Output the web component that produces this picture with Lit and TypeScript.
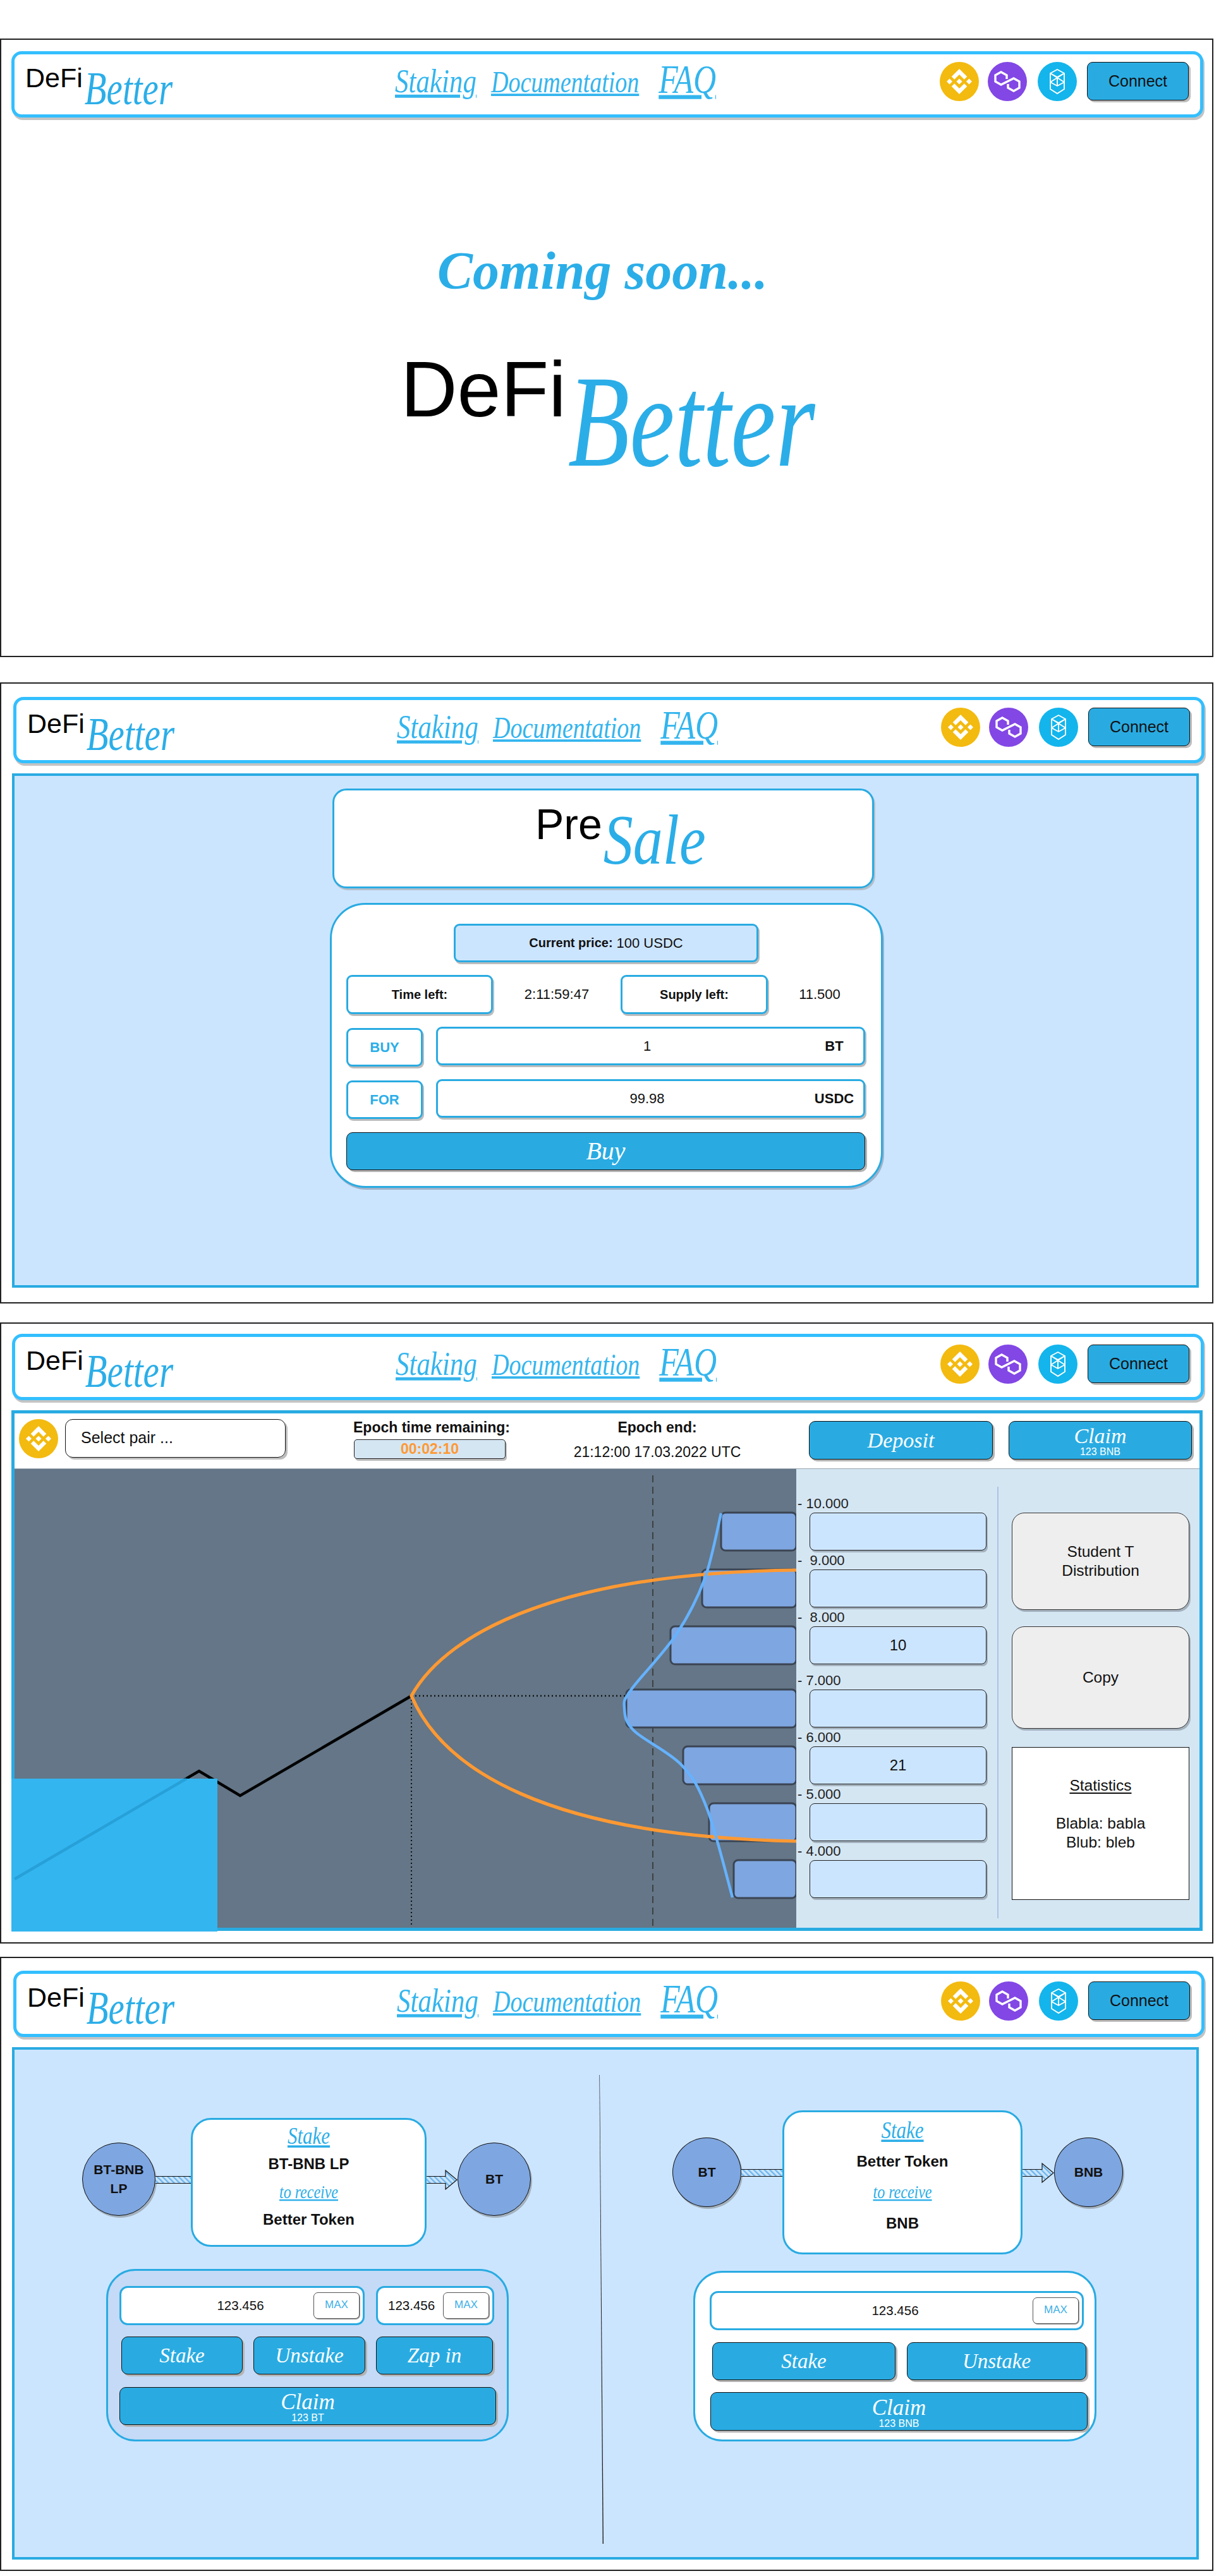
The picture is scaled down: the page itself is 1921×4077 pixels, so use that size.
import { LitElement, html, svg, css } from 'lit';
import { customElement } from 'lit/decorators.js';

type Pt = [number, number];

const ROWS = [
  { label: '- 10.000', value: '', barX: 1141, y: 2394 },
  { label: '-  9.000', value: '', barX: 1111, y: 2484 },
  { label: '-  8.000', value: '10', barX: 1061, y: 2574 },
  { label: '- 7.000', value: '', barX: 991, y: 2674, wide: true },
  { label: '- 6.000', value: '21', barX: 1081, y: 2764 },
  { label: '- 5.000', value: '', barX: 1122, y: 2854 },
  { label: '- 4.000', value: '', barX: 1161, y: 2944 },
];

const DIST: Pt[] = [
  [1141, 2395], [1115, 2499], [1070, 2587], [999, 2674], [988, 2703],
  [1003, 2739], [1078, 2793], [1119, 2863], [1159, 3003],
];

// catmull-rom through the points, good enough for the distribution curve
function smooth(p: Pt[]) {
  let d = `M${p[0][0]} ${p[0][1]}`;
  for (let i = 0; i < p.length - 1; i++) {
    const a = p[Math.max(i - 1, 0)];
    const b = p[i];
    const c = p[i + 1];
    const e = p[Math.min(i + 2, p.length - 1)];
    d += ` C${b[0] + (c[0] - a[0]) / 6} ${b[1] + (c[1] - a[1]) / 6} ${c[0] - (e[0] - b[0]) / 6} ${c[1] - (e[1] - b[1]) / 6} ${c[0]} ${c[1]}`;
  }
  return d;
}

const bnbIcon = html`
  <svg class="coin" viewBox="0 0 62 62">
    <circle cx="31" cy="31" r="31" fill="#F3BA0F"></circle>
    <g fill="#fff" transform="translate(11 11) scale(.316)">
      <path d="m38.73 53.2 24.59-24.58 24.6 24.6 14.3-14.31L63.32 0 24.43 38.9z"></path>
      <path d="m0 63.31 14.3-14.31 14.31 14.31L14.3 77.61z"></path>
      <path d="m38.73 73.41 24.59 24.59 24.6-24.6 14.31 14.29-38.9 38.91L24.41 87.7z"></path>
      <path d="m98 63.31 14.3-14.31 14.31 14.3-14.31 14.31z"></path>
      <path d="m77.83 63.3-14.51-14.52-14.52 14.52 14.52 14.51z"></path>
    </g>
  </svg>`;

const polygonIcon = html`
  <svg class="coin" viewBox="0 0 62 62">
    <circle cx="31" cy="31" r="31" fill="#8247E5"></circle>
    <path fill="none" stroke="#fff" stroke-width="3.4"
      d="M30 27V21L21 16L12 21V31L21 36L41 26L50 31V41L41 46L32 41V35"></path>
  </svg>`;

const fantomIcon = html`
  <svg class="coin" viewBox="0 0 62 62">
    <circle cx="31" cy="31" r="31" fill="#13B5EC"></circle>
    <g fill="none" stroke="#fff" stroke-width="1.9">
      <path d="M31 12L42 18V43L31 50L20 43V18Z"></path>
      <path d="M20 18L31 24L42 18M20 18L42 32M42 18L20 32M20 32L31 38L42 32M31 24V38"></path>
    </g>
  </svg>`;

@customElement('app-root')
export class AppRoot extends LitElement {
  static styles = css`
    * {
      box-sizing: border-box;
    }

    :host {
      display: block;
      width: 1921px;
      height: 4077px;
      padding-top: 61px;
      background: #fff;
      font-family: "Liberation Sans", Arial, sans-serif;
      color: #111;
      overflow: hidden;
    }

    .script {
      font-family: "Liberation Serif", "Times New Roman", serif;
      font-style: italic;
    }

    /* frames */
    .frame {
      width: 1920px;
      border: 2px solid #222;
      background: #fff;
    }
    .f1 { height: 979px; padding-top: 18px; }
    .f2 { height: 983px; padding-top: 21px; margin-top: 40px; }
    .f3 { height: 983px; padding-top: 16px; margin-top: 30px; }
    .f4 { height: 972px; padding-top: 20px; margin-top: 21px; }

    /* nav */
    .nav {
      display: grid;
      grid-template-columns: 602px auto 1fr;
      align-items: start;
      height: 105px;
      width: 1886px;
      margin-left: 16px;
      border: 5px solid #33BFFF;
      border-radius: 16px;
      background: #fff;
      box-shadow: 2px 4px 0 #c4c4c4;
    }
    .f2 .nav, .f4 .nav { margin-left: 19px; width: 1885px; }
    .f3 .nav { margin-left: 17px; }

    .logo { display: flex; align-items: flex-start; white-space: nowrap; }
    .defi { line-height: 1; color: #000; }
    .better {
      line-height: 1;
      color: #2BAEE8;
      transform: scaleY(1.3);
      transform-origin: 0 83.75%;
    }
    .nav .logo { margin: 16px 0 0 17px; }
    .nav .defi { font-size: 43px; }
    .nav .better { font-size: 57px; margin: 15px 0 0 3px; }

    .links { display: flex; align-items: baseline; margin-top: 18px; color: #33B5EE; }
    .links a {
      display: inline-block;
      text-decoration: underline;
      line-height: 50px;
      white-space: nowrap;
      transform: scaleY(1.25);
      transform-origin: 0 78%;
    }
    .l1 { font-size: 43px; }
    .l2 { font-size: 38px; margin-left: 23px; }
    .l3 { font-size: 50px; margin-left: 31px; }

    .nav-end {
      display: flex;
      justify-content: flex-end;
      align-items: flex-start;
      padding: 12px 18px 0 0;
    }
    .coin { display: block; width: 62px; height: 62px; flex: none; }
    .nav-end .coin + .coin { margin-left: 14px; }
    .nav-end .coin:nth-child(3) { margin-left: 17px; }
    .connect {
      width: 161px;
      height: 61px;
      margin-left: 16px;
      border: 1px solid #111;
      border-radius: 9px;
      background: #29ABE2;
      box-shadow: 3px 3px 0 #bdbdbd;
      font-size: 25px;
      line-height: 59px;
      text-align: center;
    }

    /* coming soon */
    .soon {
      margin-top: 201px;
      padding-right: 13px;
      font-size: 84px;
      font-weight: bold;
      line-height: 1;
      text-align: center;
      color: #2BAEE8;
    }
    .big { margin: 83px 0 0 632px; }
    .big .defi { font-size: 124px; }
    .big .better { font-size: 160px; margin: 49px 0 0 3px; }

    /* blue panels */
    .panel {
      height: 814px;
      margin: 16px 0 0 17px;
      width: 1878px;
      border: 4px solid #29ABE2;
      background: #CCE5FF;
    }
    .f4 .panel { height: 811px; display: flex; }

    .title-card, .sale-card {
      background: #fff;
      border: 3px solid #29ABE2;
      box-shadow: 2px 3px 0 #b4bfca;
    }
    .title-card {
      width: 857px;
      height: 158px;
      margin: 20px 0 0 503px;
      border-radius: 22px;
      padding: 19px 0 0 318px;
    }
    .title-card .defi { font-size: 68px; }
    .title-card .better {
      font-size: 94px;
      margin: 18px 0 0 2px;
      transform: scaleY(1.2);
    }
    .sale-card {
      width: 875px;
      height: 451px;
      margin: 23px 0 0 499px;
      border-radius: 56px;
      padding: 30px 0 0 23px;
      box-shadow: 2px 3px 0 #9fb2c8;
    }

    .pill {
      border: 3px solid #29ABE2;
      border-radius: 9px;
      background: #fff;
      box-shadow: 2px 3px 0 #bdbdbd;
      display: flex;
      align-items: center;
      justify-content: center;
      font-size: 20px;
      font-weight: bold;
    }
    .price {
      width: 482px;
      height: 61px;
      margin-left: 170px;
      background: #CCE5FF;
    }
    .price span { font-size: 22px; font-weight: normal; margin-left: 6px; }
    .time-row {
      display: grid;
      grid-template-columns: 232px 202px 233px 154px;
      margin-top: 20px;
      align-items: center;
      font-size: 22px;
      text-align: center;
    }
    .time-row .pill { height: 62px; }
    .time-row .last { padding-left: 10px; }
    .trade-row {
      display: grid;
      grid-template-columns: 121px 679px;
      column-gap: 21px;
      margin-top: 20px;
      align-items: start;
    }
    .trade-row .pill {
      height: 61px;
      margin-top: 2px;
      font-size: 22px;
      color: #2BAEE8;
    }
    .trade-input {
      display: grid;
      height: 61px;
      padding-right: 11px;
      border: 3px solid #29ABE2;
      border-radius: 9px;
      background: #fff;
      box-shadow: 2px 3px 0 #bdbdbd;
      font-size: 22px;
      align-items: center;
    }
    .trade-input > span { grid-area: 1 / 1; text-align: center; }
    .trade-input .unit { justify-self: end; width: 70px; font-weight: bold; }

    .btn {
      display: flex;
      flex-direction: column;
      align-items: center;
      justify-content: center;
      border: 1px solid #111;
      border-radius: 10px;
      background: #29ABE2;
      box-shadow: 3px 3px 0 #b4b4b4;
      color: #fff;
      font-size: 33px;
      line-height: 1;
      flex: none;
    }
    .btn small {
      font-family: "Liberation Sans", Arial, sans-serif;
      font-style: normal;
      font-size: 16px;
    }
    .buy { width: 821px; height: 60px; margin-top: 21px; font-size: 40px; }

    /* epoch box */
    .epoch {
      width: 1885px;
      height: 824px;
      margin: 16px 0 0 16px;
      border: 5px solid #29ABE2;
    }
    .epoch-head {
      display: flex;
      align-items: flex-start;
      height: 88px;
      padding: 9px 0 0 7px;
      border-bottom: 1px solid #9aa4ae;
      font-size: 23px;
      text-align: center;
    }
    .select {
      width: 349px;
      height: 61px;
      margin-left: 11px;
      padding-left: 24px;
      border: 1px solid #111;
      border-radius: 12px;
      box-shadow: 3px 3px 0 #bdbdbd;
      font-size: 25px;
      line-height: 56px;
      text-align: left;
    }
    .epoch-left {
      width: 246px;
      margin-left: 107px;
      font-weight: bold;
      line-height: 26px;
      white-space: nowrap;
    }
    .timer {
      width: 240px;
      height: 31px;
      margin: 6px 0 0 1px;
      border: 1px solid #222;
      border-radius: 5px;
      background: #D5E6F3;
      box-shadow: 2px 3px 0 #bdbdbd;
      color: #FF9933;
      line-height: 29px;
    }
    .epoch-end { width: 300px; margin-left: 85px; line-height: 26px; }
    .epoch-end b { display: block; }
    .epoch-end span { display: block; margin-top: 13px; }
    .epoch-head .btn { width: 291px; height: 61px; margin-top: 3px; font-size: 34px; }
    .deposit { margin-left: 90px; }
    .epoch-head .claim { width: 290px; margin-left: 25px; padding-top: 3px; }

    .epoch-body { display: flex; height: 726px; }
    .chart { display: block; width: 1237px; height: 726px; flex: none; overflow: visible; }
    .side {
      display: flex;
      width: 639px;
      background: #D5E6F3;
    }
    .levels { width: 318px; padding: 39px 0 0 2px; flex: none; }
    .level { margin-top: 2px; }
    .level.wide { margin-top: 12px; }
    .level .mark { font-size: 22px; line-height: 28px; white-space: pre; color: #222; }
    .level .cell {
      width: 280px;
      height: 60px;
      margin-left: 19px;
      border: 1px solid #222;
      border-radius: 8px;
      background: #CCE5FF;
      box-shadow: 2px 3px 0 #a3b1bd;
      font-size: 24px;
      line-height: 58px;
      text-align: center;
    }
    .rule {
      width: 2px;
      height: 683px;
      margin-top: 28px;
      background: #A9C4E4;
      flex: none;
    }
    .tools { width: 281px; margin: 69px 0 0 21px; font-size: 24.5px; line-height: 30px; text-align: center; }
    .tool {
      display: flex;
      align-items: center;
      justify-content: center;
      border: 1px solid #333;
      border-radius: 20px;
      background: #EEEEEE;
      box-shadow: 2px 3px 0 #a3b1bd;
    }
    .t1 { height: 154px; }
    .t2 { height: 162px; margin-top: 26px; }
    .stats {
      height: 242px;
      margin-top: 29px;
      border: 1px solid #111;
      background: #fff;
      display: flex;
      align-items: center;
      justify-content: center;
    }
    .stats u { text-underline-offset: 3px; }

    /* stake */
    .col { flex: none; }
    .col.a { width: 710px; margin-left: 107px; padding-top: 108px; }
    .col.b { width: 713px; padding-top: 96px; }
    .gap { width: 224px; flex: none; display: flex; justify-content: center; }
    .gap svg { display: block; margin-top: 40px; }

    .flow { display: flex; align-items: flex-start; }
    .node {
      display: flex;
      align-items: center;
      justify-content: center;
      flex: none;
      border: 1px solid #111;
      border-radius: 50%;
      background: #7EA6E0;
      box-shadow: 2px 3px 0 #a3b1bd;
      font-size: 21px;
      font-weight: bold;
      line-height: 30px;
      text-align: center;
    }
    .a .node { width: 116px; height: 116px; margin-top: 39px; }
    .b .node { width: 109px; height: 110px; margin-top: 43px; }
    .shaft { display: block; flex: none; margin-top: 92px; }
    .head { display: block; flex: none; margin-top: 82px; }
    .b .shaft { margin-top: 93px; }
    .b .head { margin-top: 83px; }

    .info {
      flex: none;
      border: 3px solid #29ABE2;
      border-radius: 32px;
      background: #fff;
      display: grid;
      justify-items: center;
      align-items: center;
      align-content: start;
      padding-top: 4px;
      font-size: 24px;
      font-weight: bold;
    }
    .a .info { width: 373px; height: 204px; grid-auto-rows: 44px; }
    .b .info { width: 380px; height: 228px; grid-auto-rows: 49px; }
    .info .script {
      font-weight: normal;
      color: #2BAEE8;
      text-decoration: underline;
      transform: scaleY(1.2);
    }
    .info .s1 { font-size: 31px; }
    .info .s2 { font-size: 24px; }

    .box {
      border: 3px solid #29ABE2;
      border-radius: 46px;
    }
    .a .box {
      width: 637px;
      height: 273px;
      margin: 35px 0 0 38px;
      padding: 24px 0 0 18px;
      background: #C4DAF6;
    }
    .b .box {
      width: 638px;
      height: 270px;
      margin: 26px 0 0 33px;
      padding: 29px 0 0 23px;
      background: #fff;
    }
    .line { display: flex; }
    .amount {
      display: grid;
      align-items: center;
      height: 62px;
      padding-right: 5px;
      border: 3px solid #29ABE2;
      border-radius: 13px;
      background: #fff;
      font-size: 20.5px;
      flex: none;
    }
    .amount > * { grid-area: 1 / 1; }
    .amount .val { text-align: center; }
    .amount.tight .val { text-align: left; padding-left: 16px; }
    .max {
      justify-self: end;
      width: 73px;
      height: 42px;
      border: 1px solid #555;
      border-radius: 7px;
      background: #fff;
      box-shadow: 1px 1px 0 #999;
      color: #3BB0E8;
      font-size: 17px;
      line-height: 38px;
      text-align: center;
    }
    .a .amount.w1 { width: 388px; }
    .a .amount.tight { width: 187px; margin-left: 18px; }
    .b .amount.w1 { width: 592px; }
    .a .acts { margin: 18px 0 0 3px; }
    .b .acts { margin: 19px 0 0 4px; }
    .a .acts .btn { height: 60px; }
    .b .acts .btn { height: 60px; }
    .a .b1 { width: 192px; }
    .a .b2 { width: 177px; margin-left: 17px; }
    .a .b3 { width: 185px; margin-left: 17px; }
    .b .b1 { width: 290px; }
    .b .b2 { width: 284px; margin-left: 18px; }
    .wide-btn { height: 60px; margin-top: 20px; padding-top: 3px; font-size: 35px; }
    .a .wide-btn { width: 596px; }
    .b .wide-btn { width: 597px; margin-left: 1px; height: 61px; margin-top: 19px; }
  `;

  private logo(word: string, first = 'DeFi') {
    return html`
      <div class="logo">
        <span class="defi">${first}</span>
        <span class="better script">${word}</span>
      </div>`;
  }

  private nav() {
    return html`
      <div class="nav">
        ${this.logo('Better')}
        <div class="links script">
          <a class="l1">Staking</a>
          <a class="l2">Documentation</a>
          <a class="l3">FAQ</a>
        </div>
        <div class="nav-end">
          ${bnbIcon} ${polygonIcon} ${fantomIcon}
          <div class="connect">Connect</div>
        </div>
      </div>`;
  }

  private presale() {
    return html`
      <div class="panel">
        <div class="title-card">${this.logo('Sale', 'Pre')}</div>
        <div class="sale-card">
          <div class="pill price">Current price: <span>100 USDC</span></div>
          <div class="time-row">
            <div class="pill">Time left:</div>
            <div>2:11:59:47</div>
            <div class="pill">Supply left:</div>
            <div class="last">11.500</div>
          </div>
          <div class="trade-row">
            <div class="pill">BUY</div>
            <div class="trade-input"><span>1</span><span class="unit">BT</span></div>
          </div>
          <div class="trade-row">
            <div class="pill">FOR</div>
            <div class="trade-input"><span>99.98</span><span class="unit">USDC</span></div>
          </div>
          <div class="btn script buy">Buy</div>
        </div>
      </div>`;
  }

  private chart() {
    return html`
      <svg class="chart" viewBox="23 2325 1237 726">
        <rect x="23" y="2325" width="1237" height="726" fill="#647687"></rect>
        <path d="M1033 2335V3048" stroke="#3c4043" stroke-width="2" stroke-dasharray="11 7"></path>
        <path d="M651 2684H991" stroke="#111" stroke-width="2.4" stroke-dasharray="2 4"></path>
        <path d="M651 2684V3048" stroke="#111" stroke-width="2" stroke-dasharray="2 4"></path>
        ${ROWS.map(r => svg`
          <rect x=${r.barX} y=${r.y} width=${1260 - r.barX} height="60" rx="7"
            fill="#7EA6E0" stroke="#3b4453" stroke-width="3"></rect>`)}
        <path d="M23 2974L315 2803L380 2842L651 2684" fill="none" stroke="#000" stroke-width="4.4"></path>
        <path d="M1260 2485C900 2489 710 2578 651 2684C700 2798 860 2906 1260 2914"
          fill="none" stroke="#FF9933" stroke-width="5.2"></path>
        <path d=${smooth(DIST)} fill="none" stroke="#66B2FF" stroke-width="4.4"></path>
        <rect x="18" y="2815" width="326" height="242" fill="#33B5F0"></rect>
        <path d="M23 2974L295 2815" fill="none" stroke="#1d8ec4" stroke-opacity=".55" stroke-width="4.4"></path>
      </svg>`;
  }

  private epoch() {
    return html`
      <div class="epoch">
        <div class="epoch-head">
          ${bnbIcon}
          <div class="select">Select pair ...</div>
          <div class="epoch-left">
            Epoch time remaining:
            <div class="timer">00:02:10</div>
          </div>
          <div class="epoch-end"><b>Epoch end:</b><span>21:12:00 17.03.2022 UTC</span></div>
          <div class="btn script deposit">Deposit</div>
          <div class="btn script claim">Claim<small>123 BNB</small></div>
        </div>
        <div class="epoch-body">
          ${this.chart()}
          <div class="side">
            <div class="levels">
              ${ROWS.map(r => html`
                <div class="level ${r.wide ? 'wide' : ''}">
                  <div class="mark">${r.label}</div>
                  <div class="cell">${r.value}</div>
                </div>`)}
            </div>
            <div class="rule"></div>
            <div class="tools">
              <div class="tool t1"><span>Student T<br />Distribution</span></div>
              <div class="tool t2">Copy</div>
              <div class="stats"><span><u>Statistics</u><br /><br />Blabla: babla<br />Blub: bleb<br />&nbsp;</span></div>
            </div>
          </div>
        </div>
      </div>`;
  }

  private arrowDefs() {
    return html`
      <svg width="0" height="0" style="position:absolute">
        <defs>
          <pattern id="hatch" width="6" height="6" patternUnits="userSpaceOnUse" patternTransform="rotate(-45)">
            <rect width="6" height="6" fill="#CCE5FF"></rect>
            <rect width="2.4" height="6" fill="#6DB6EC"></rect>
          </pattern>
        </defs>
      </svg>`;
  }

  private shaft(w: number) {
    return html`
      <svg class="shaft" width=${w} height="12" viewBox="0 0 ${w} 12">
        <rect y=".5" width=${w} height="11" fill="url(#hatch)"></rect>
        <path d="M0 .5H${w}M0 11.5H${w}" stroke="#111" stroke-width="1.2"></path>
      </svg>`;
  }

  private head(w: number) {
    return html`
      <svg class="head" width=${w} height="32" viewBox="0 0 ${w} 32">
        <path d="M0 10.5H${w - 19}V1L${w - 1} 16L${w - 19} 31V21.5H0" fill="url(#hatch)" stroke="#111" stroke-width="1.2"></path>
      </svg>`;
  }

  private amount(cls: string) {
    return html`<div class="amount ${cls}"><span class="val">123.456</span><div class="max">MAX</div></div>`;
  }

  private stake() {
    return html`
      <div class="panel">
        ${this.arrowDefs()}
        <div class="col a">
          <div class="flow">
            <div class="node">BT-BNB<br />LP</div>
            ${this.shaft(56)}
            <div class="info">
              <span class="script s1">Stake</span>
              <span>BT-BNB LP</span>
              <span class="script s2">to receive</span>
              <span>Better Token</span>
            </div>
            ${this.head(49)}
            <div class="node">BT</div>
          </div>
          <div class="box">
            <div class="line">${this.amount('w1')}${this.amount('tight')}</div>
            <div class="line acts">
              <div class="btn script b1">Stake</div>
              <div class="btn script b2">Unstake</div>
              <div class="btn script b3">Zap in</div>
            </div>
            <div class="btn script wide-btn">Claim<small>123 BT</small></div>
          </div>
        </div>
        <div class="gap">
          <svg width="8" height="742" viewBox="0 0 8 742">
            <path d="M1 0L7 742L5.6 742L.4 0Z" fill="#222"></path>
          </svg>
        </div>
        <div class="col b">
          <div class="flow">
            <div class="node">BT</div>
            ${this.shaft(65)}
            <div class="info">
              <span class="script s1">Stake</span>
              <span>Better Token</span>
              <span class="script s2">to receive</span>
              <span>BNB</span>
            </div>
            ${this.head(50)}
            <div class="node">BNB</div>
          </div>
          <div class="box">
            <div class="line">${this.amount('w1')}</div>
            <div class="line acts">
              <div class="btn script b1">Stake</div>
              <div class="btn script b2">Unstake</div>
            </div>
            <div class="btn script wide-btn">Claim<small>123 BNB</small></div>
          </div>
        </div>
      </div>`;
  }

  render() {
    return html`
      <section class="frame f1">
        ${this.nav()}
        <div class="soon script">Coming soon...</div>
        <div class="big">${this.logo('Better')}</div>
      </section>
      <section class="frame f2">${this.nav()}${this.presale()}</section>
      <section class="frame f3">${this.nav()}${this.epoch()}</section>
      <section class="frame f4">${this.nav()}${this.stake()}</section>
    `;
  }
}
